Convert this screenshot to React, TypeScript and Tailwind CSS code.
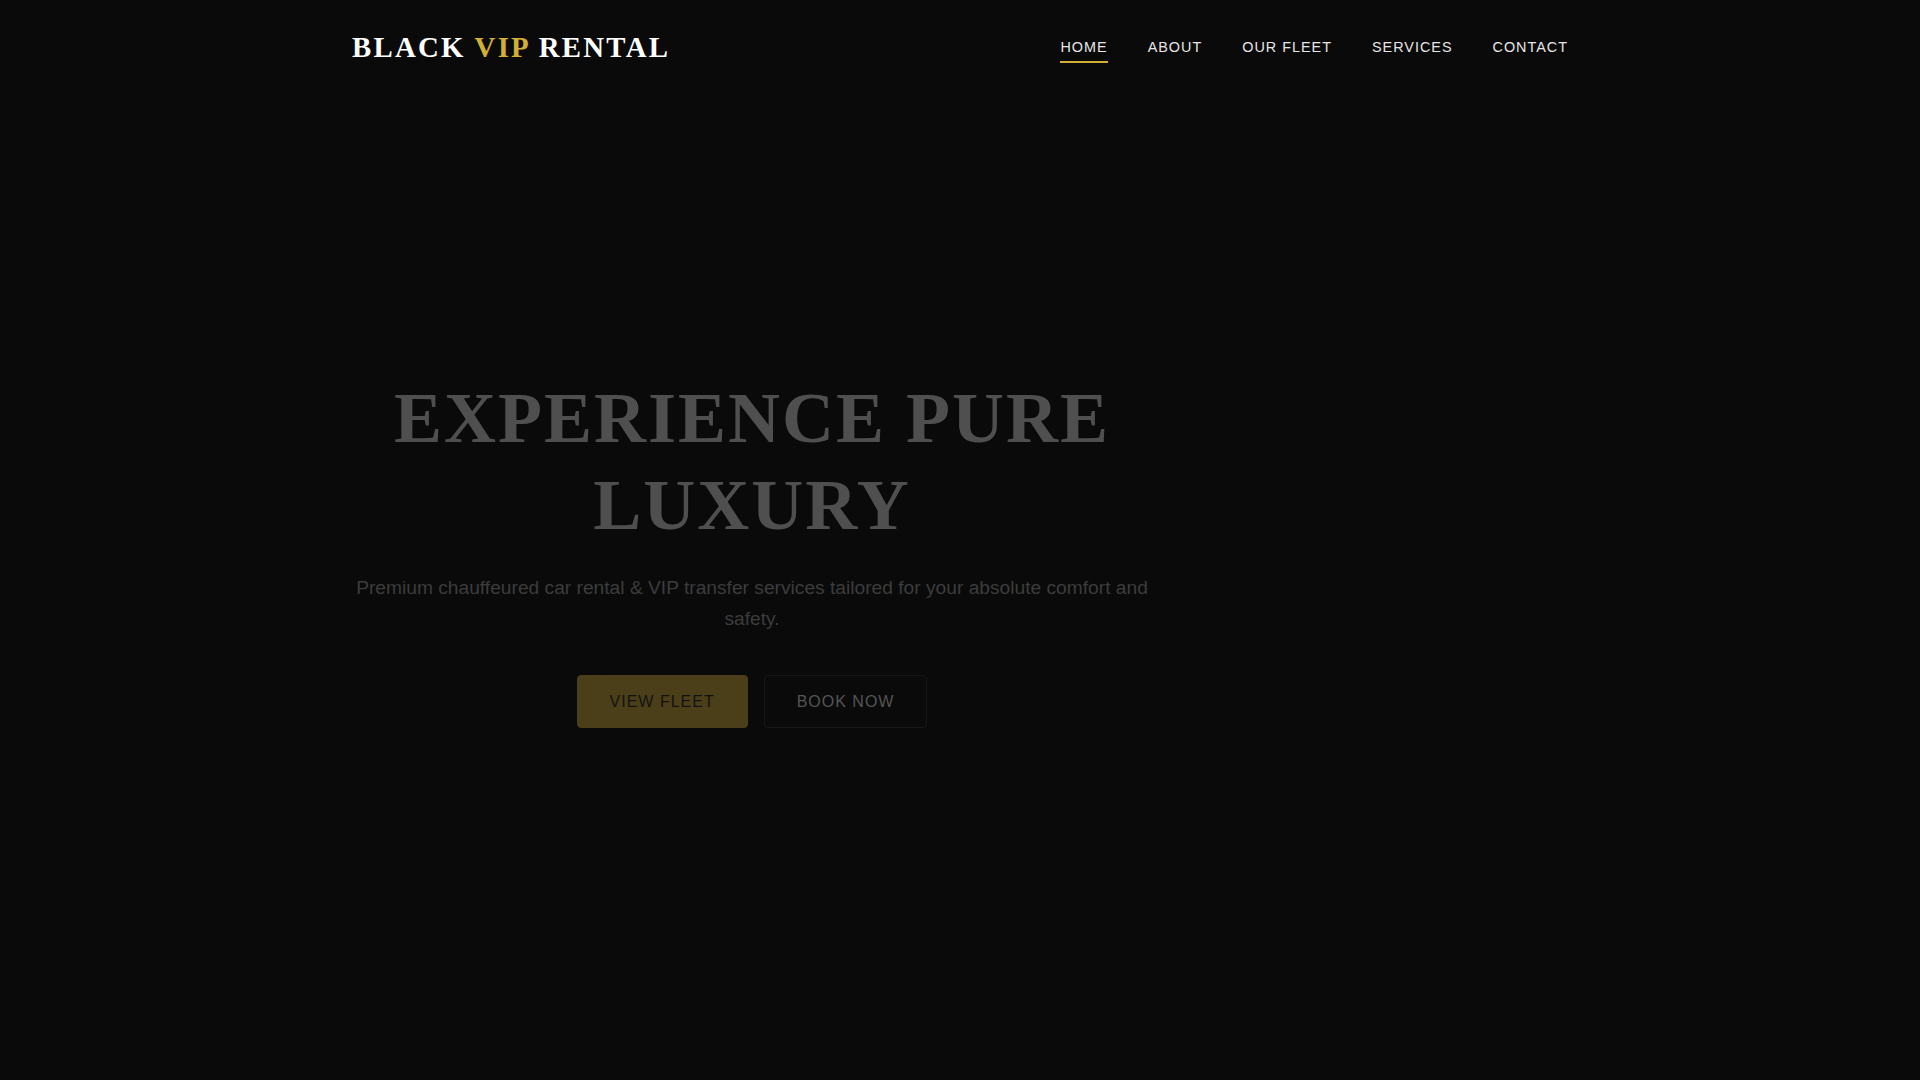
const links = ['HOME', 'ABOUT', 'OUR FLEET', 'SERVICES', 'CONTACT']

export default function App() {
  return (
    <div className="relative min-h-screen bg-[#0a0a0a] font-['Liberation_Sans',Arial,sans-serif]">
      {/* Header */}
      <header className="absolute inset-x-0 top-0 z-10">
        <div className="mx-auto flex w-[1216px] items-center justify-between py-[31px]">
          <a className="font-['Liberation_Serif','Times_New_Roman',serif] text-[28.8px] font-bold leading-[32px] tracking-[2.25px] text-white">
            BLACK <span className="text-[#d4af37]">VIP</span> RENTAL
          </a>
          <nav className="flex items-center gap-10">
            {links.map((l, i) => (
              <a
                key={l}
                className="relative text-[14.4px] leading-[17px] tracking-[1px] text-[#e6e6e6]"
              >
                {l}
                {i === 0 && (
                  <span className="absolute -bottom-[7px] left-0 right-0 h-[2px] bg-[#d4af37]" />
                )}
              </a>
            ))}
          </nav>
        </div>
      </header>

      {/* Hero */}
      <section className="flex h-screen items-center pt-[23px]">
        <div className="mx-auto w-[1216px]">
          <div className="w-[800px] text-center">
            <h1 className="mb-[25px] font-['Liberation_Serif','Times_New_Roman',serif] text-[72px] font-bold leading-[1.2] tracking-[2px] text-[#4f4f4f]">
              EXPERIENCE PURE LUXURY
            </h1>
            <p className="mb-[40px] text-[19.2px] leading-[1.6] text-[#3c3c3c]">
              Premium chauffeured car rental &amp; VIP transfer services tailored for your absolute comfort and safety.
            </p>
            <div className="flex justify-center gap-4">
              <button className="rounded border border-[#4b3f19] bg-[#4b3f19] px-8 py-[15px] text-[16px] leading-[21px] tracking-[1px] text-[#141210]">
                VIEW FLEET
              </button>
              <button className="rounded border border-[#171717] bg-transparent px-8 py-[15px] text-[16px] leading-[21px] tracking-[1px] text-[#555555]">
                BOOK NOW
              </button>
            </div>
          </div>
        </div>
      </section>
    </div>
  )
}
